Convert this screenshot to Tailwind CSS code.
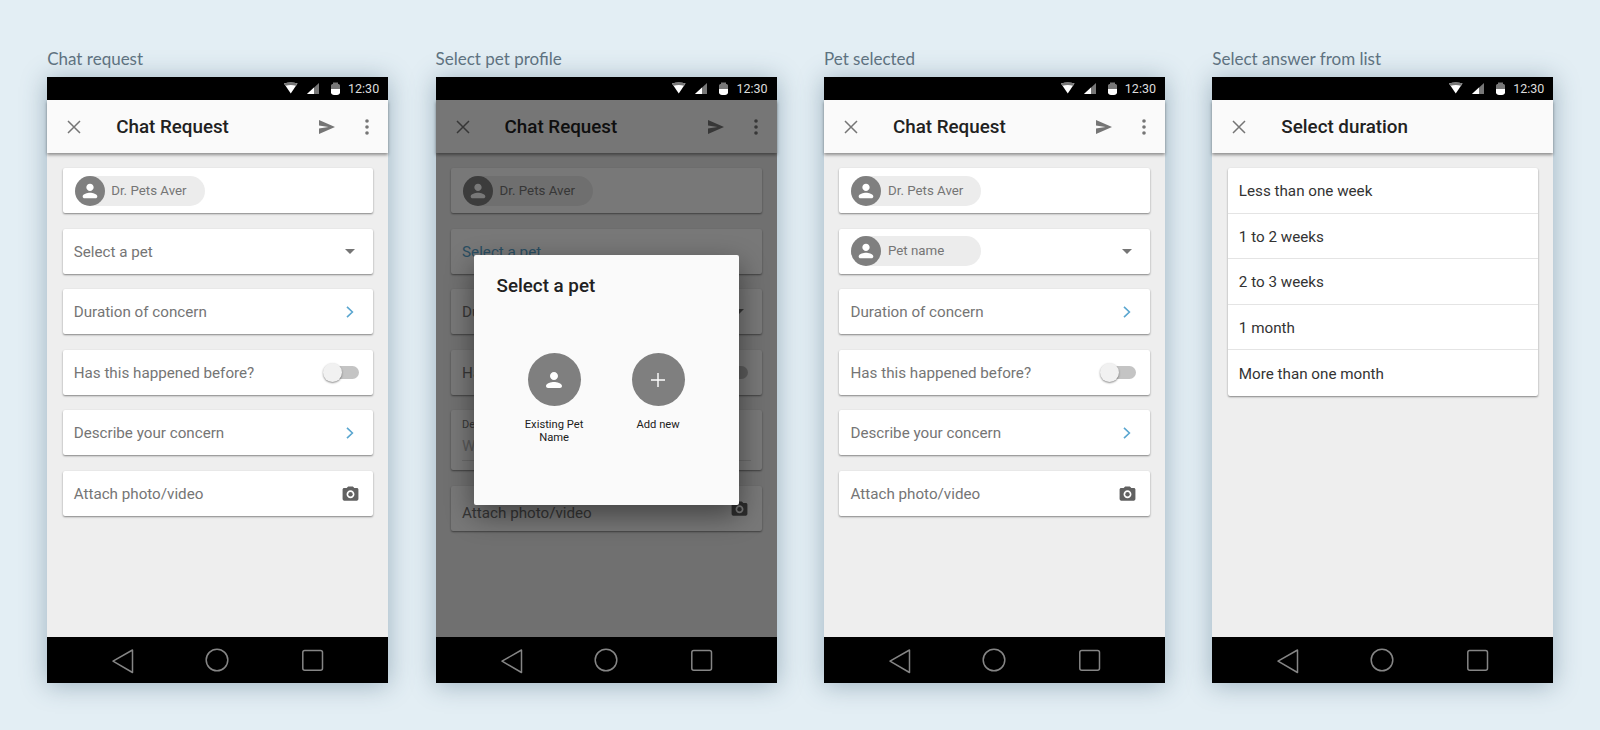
<!DOCTYPE html>
<html lang="en">
<head>
  <meta charset="UTF-8">
  <title>Chat request screens</title>
  <script src="https://cdn.jsdelivr.net/npm/@tailwindcss/browser@4"></script>
</head>
<body class="bg-[#e3eef4] font-['Roboto',sans-serif] h-[730px] w-[1600px] overflow-hidden">
  <!-- shared icons -->
  <svg class="absolute w-0 h-0">
    <symbol id="i-close" viewBox="0 0 14 14"><path d="M1 1l12 12M13 1L1 13" fill="none" stroke="currentColor" stroke-width="1.5"/></symbol>
    <symbol id="i-send" viewBox="0 0 16 14"><path d="M0 0l16 7-16 7V8.6L9.5 7 0 5.400z" fill="currentColor"/></symbol>
    <symbol id="i-dots" viewBox="0 0 4 16"><circle cx="2" cy="2" r="1.800" fill="currentColor"/><circle cx="2" cy="8" r="1.800" fill="currentColor"/><circle cx="2" cy="14" r="1.800" fill="currentColor"/></symbol>
    <symbol id="i-person" viewBox="0 0 24 24"><path d="M12 12c2.210 0 4-1.790 4-4s-1.790-4-4-4-4 1.790-4 4 1.790 4 4 4zm0 2c-2.670 0-8 1.340-8 4 0 1.100.9 2 2 2h12c1.100 0 2-.9 2-2 0-2.660-5.330-4-8-4z" fill="currentColor"/></symbol>
    <symbol id="i-caret" viewBox="0 0 10 5"><path d="M0 0h10L5 5z" fill="currentColor"/></symbol>
    <symbol id="i-chevron" viewBox="0 0 8 12"><path d="M1 .8L6.400 6 1 11.200" fill="none" stroke="currentColor" stroke-width="1.600"/></symbol>
    <symbol id="i-camera" viewBox="0 0 24 24"><path d="M9 3L7.170 5H4c-1.100 0-2 .9-2 2v12c0 1.100.9 2 2 2h16c1.100 0 2-.9 2-2V7c0-1.100-.9-2-2-2h-3.170L15 3H9zm3 15c-2.760 0-5-2.240-5-5s2.240-5 5-5 5 2.240 5 5-2.240 5-5 5z" fill="currentColor"/><circle cx="12" cy="13" r="2.800" fill="currentColor"/></symbol>
    <symbol id="i-status" viewBox="0 0 56 13">
      <path d="M0 1.500C4 0 9.500 0 13.500 1.500L6.750 11.500z" fill="#fff"/>
      <path d="M0 1.500C4 0 9.500 0 13.500 1.500L12 3.700C8.500 2.700 5 2.700 1.500 3.700z" fill="#777"/>
      <path d="M23 12L35 1v11z" fill="#777"/>
      <path d="M23 12l7-6.400V12z" fill="#fff"/>
      <path d="M47 3.500C47 2.500 48 2 49 2V.5h5V2c1 0 2 .5 2 1.500V7h-9z" fill="#777"/>
      <path d="M47 7h9v3.500c0 1.500-1.500 2.500-3 2.500h-3c-1.500 0-3-1-3-2.500z" fill="#fff"/>
    </symbol>
    <symbol id="i-nav" viewBox="0 0 341 46">
      <g fill="none" stroke="#858585" stroke-width="1.500" stroke-linejoin="round">
        <path d="M85.500 13v22.500L66 24.200z"/>
        <circle cx="170" cy="23" r="10.800"/>
        <rect x="255.800" y="13.500" width="19.700" height="19.700" rx="2"/>
      </g>
    </symbol>
  </svg>

  <main class="flex gap-[47.4px] pl-[47.2px] pt-[47px]">

    <!-- Chat request -->
    <section class="w-[341px]">
      <h2 class="h-[24px] mb-[6px] font-['Lato',sans-serif] font-normal text-[17px] leading-[24px] text-[#5e7280]">Chat request</h2>
      <div class="h-[606px] flex flex-col bg-[#eeeeee] shadow-[0_2px_24px_rgba(50,85,110,0.4)]">
        <div class="h-[23px] bg-black flex items-center justify-end pr-[9px] shrink-0">
          <svg class="w-[56px] h-[13px] mr-[8px]"><use href="#i-status"/></svg>
          <span class="mt-[2px] text-[12.500px] leading-none text-[#dddddd]">12:30</span>
        </div>
        <div class="flex-1 flex flex-col min-h-0">
          <header class="h-[53px] bg-[#fafafa] flex items-center relative z-10 shadow-[0_2px_3px_rgba(0,0,0,0.4)] text-[#757575]">
            <svg class="w-[14px] h-[14px] ml-[20px]"><use href="#i-close"/></svg>
            <h1 class="ml-[35px] mt-[2px] flex-1 text-[18.800px] font-medium text-[#212121]">Chat Request</h1>
            <svg class="w-[16px] h-[14px] mr-[30px]"><use href="#i-send"/></svg>
            <svg class="w-[4px] h-[16px] mr-[19px]"><use href="#i-dots"/></svg>
          </header>
          <div class="flex flex-col gap-[15.500px] pl-[15.500px] pr-[15px] pt-[15px]">
            <div class="h-[45px] bg-white rounded-[2px] shadow-[0_1px_2px_rgba(0,0,0,0.45)] flex items-center px-[12px]">
              <div class="w-[130px] h-[30px] rounded-full bg-[#ececec] flex items-center gap-[6.500px]">
                <span class="w-[30px] h-[30px] rounded-full bg-[#7f7f7f] text-white flex items-center justify-center"><svg class="w-[22px] h-[22px]"><use href="#i-person"/></svg></span>
                <span class="text-[13.300px] text-[#757575]">Dr. Pets Aver</span>
              </div>
            </div>
            <div class="h-[45px] bg-white rounded-[2px] shadow-[0_1px_2px_rgba(0,0,0,0.45)] flex items-center justify-between pl-[11px] pr-[18px] text-[15.200px] text-[#757575]">
              <span class="mt-[2px]">Select a pet</span>
              <svg class="w-[10px] h-[5px]"><use href="#i-caret"/></svg>
            </div>
            <div class="h-[45px] bg-white rounded-[2px] shadow-[0_1px_2px_rgba(0,0,0,0.45)] flex items-center justify-between pl-[11px] pr-[19px] text-[15.200px] text-[#757575]">
              <span class="mt-[2px]">Duration of concern</span>
              <svg class="w-[8px] h-[12px] text-[#5aa6d0]"><use href="#i-chevron"/></svg>
            </div>
            <div class="h-[45px] bg-white rounded-[2px] shadow-[0_1px_2px_rgba(0,0,0,0.45)] flex items-center justify-between pl-[11px] pr-[14px] text-[15.200px] text-[#757575]">
              <span class="mt-[2px]">Has this happened before?</span>
              <span class="relative w-[29px] h-[13px] rounded-full bg-[#c4c4c4]"><span class="absolute left-[-7px] top-[-3px] w-[19px] h-[19px] rounded-full bg-[#f1f1f1] shadow-[0_1px_2px_rgba(0,0,0,0.45)]"></span></span>
            </div>
            <div class="h-[45px] bg-white rounded-[2px] shadow-[0_1px_2px_rgba(0,0,0,0.45)] flex items-center justify-between pl-[11px] pr-[19px] text-[15.200px] text-[#757575]">
              <span class="mt-[2px]">Describe your concern</span>
              <svg class="w-[8px] h-[12px] text-[#5aa6d0]"><use href="#i-chevron"/></svg>
            </div>
            <div class="h-[45px] bg-white rounded-[2px] shadow-[0_1px_2px_rgba(0,0,0,0.45)] flex items-center justify-between pl-[11px] pr-[13px] text-[15.200px] text-[#757575]">
              <span class="mt-[2px]">Attach photo/video</span>
              <svg class="w-[19px] h-[19px] text-[#616161]"><use href="#i-camera"/></svg>
            </div>
          </div>
        </div>
        <div class="h-[46px] bg-black shrink-0"><svg class="w-[341px] h-[46px]"><use href="#i-nav"/></svg></div>
      </div>
    </section>

    <!-- Select pet profile -->
    <section class="w-[341px]">
      <h2 class="h-[24px] mb-[6px] font-['Lato',sans-serif] font-normal text-[17px] leading-[24px] text-[#5e7280]">Select pet profile</h2>
      <div class="h-[606px] flex flex-col bg-[#eeeeee] shadow-[0_2px_24px_rgba(50,85,110,0.4)]">
        <div class="h-[23px] bg-black flex items-center justify-end pr-[9px] shrink-0">
          <svg class="w-[56px] h-[13px] mr-[8px]"><use href="#i-status"/></svg>
          <span class="mt-[2px] text-[12.500px] leading-none text-[#dddddd]">12:30</span>
        </div>
        <div class="flex-1 flex flex-col min-h-0 relative">
          <header class="h-[53px] bg-[#fafafa] flex items-center relative z-10 shadow-[0_2px_3px_rgba(0,0,0,0.4)] text-[#757575]">
            <svg class="w-[14px] h-[14px] ml-[20px]"><use href="#i-close"/></svg>
            <h1 class="ml-[35px] mt-[2px] flex-1 text-[18.800px] font-medium text-[#212121]">Chat Request</h1>
            <svg class="w-[16px] h-[14px] mr-[30px]"><use href="#i-send"/></svg>
            <svg class="w-[4px] h-[16px] mr-[19px]"><use href="#i-dots"/></svg>
          </header>
          <div class="flex flex-col gap-[15.500px] pl-[15.500px] pr-[15px] pt-[15px]">
            <div class="h-[45px] bg-white rounded-[2px] shadow-[0_1px_2px_rgba(0,0,0,0.45)] flex items-center px-[12px]">
              <div class="w-[130px] h-[30px] rounded-full bg-[#ececec] flex items-center gap-[6.500px]">
                <span class="w-[30px] h-[30px] rounded-full bg-[#7f7f7f] text-white flex items-center justify-center"><svg class="w-[22px] h-[22px]"><use href="#i-person"/></svg></span>
                <span class="text-[13.300px] text-[#757575]">Dr. Pets Aver</span>
              </div>
            </div>
            <div class="h-[45px] bg-white rounded-[2px] shadow-[0_1px_2px_rgba(0,0,0,0.45)] flex items-center pl-[11px] text-[15.200px] text-[#5aa6d0]">
              <span class="mt-[2px]">Select a pet</span>
            </div>
            <div class="h-[45px] bg-white rounded-[2px] shadow-[0_1px_2px_rgba(0,0,0,0.45)] flex items-center justify-between pl-[11px] pr-[18px] text-[15.200px] text-[#757575]">
              <span class="mt-[2px]">Duration of concern</span>
              <svg class="w-[10px] h-[5px]"><use href="#i-caret"/></svg>
            </div>
            <div class="h-[45px] bg-white rounded-[2px] shadow-[0_1px_2px_rgba(0,0,0,0.45)] flex items-center justify-between pl-[11px] pr-[14px] text-[15.200px] text-[#757575]">
              <span class="mt-[2px]">Has this happened before?</span>
              <span class="relative w-[29px] h-[13px] rounded-full bg-[#c4c4c4]"><span class="absolute left-[-7px] top-[-3px] w-[19px] h-[19px] rounded-full bg-[#f1f1f1]"></span></span>
            </div>
            <div class="h-[60px] bg-white rounded-[2px] shadow-[0_1px_2px_rgba(0,0,0,0.45)] flex flex-col px-[11px] pt-[8px] text-[#757575]">
              <span class="text-[11px] leading-[13px]">Describe your concern</span>
              <span class="mt-[5px] pb-[4px] text-[15.200px] leading-[20px] text-[#bdbdbd] border-b border-[#e0e0e0]">What is your concern?</span>
            </div>
            <div class="h-[45px] bg-white rounded-[2px] shadow-[0_1px_2px_rgba(0,0,0,0.45)] flex items-center justify-between pl-[11px] pr-[13px] text-[15.200px] text-[#757575]">
              <span class="mt-[10px]">Attach photo/video</span>
              <svg class="w-[19px] h-[19px] text-[#616161]"><use href="#i-camera"/></svg>
            </div>
          </div>
          <div class="absolute inset-0 z-20 bg-black/[0.53]"></div>
          <div class="absolute z-30 left-[38px] top-[155px] w-[265px] h-[250px] rounded-[2px] bg-[#fafafa] shadow-[0_10px_28px_rgba(0,0,0,0.45)] pt-[19px]">
            <h3 class="pl-[23px] text-[18.800px] leading-[24px] font-medium text-[#212121]">Select a pet</h3>
            <div class="flex justify-center gap-[24px] mt-[55px]">
              <div class="w-[80px] flex flex-col items-center">
                <span class="w-[53px] h-[53px] rounded-full bg-[#7f7f7f] text-white flex items-center justify-center"><svg class="w-[24px] h-[24px]"><use href="#i-person"/></svg></span>
                <span class="mt-[12px] text-[11.200px] leading-[13px] text-center text-[#212121]">Existing Pet Name</span>
              </div>
              <div class="w-[80px] flex flex-col items-center">
                <span class="w-[53px] h-[53px] rounded-full bg-[#7f7f7f] text-white flex items-center justify-center"><svg class="w-[14px] h-[14px]" viewBox="0 0 14 14"><path d="M7 0v14M0 7h14" stroke="currentColor" stroke-width="1.400"/></svg></span>
                <span class="mt-[12px] text-[11.200px] leading-[13px] text-center text-[#212121]">Add new</span>
              </div>
            </div>
          </div>
        </div>
        <div class="h-[46px] bg-black shrink-0"><svg class="w-[341px] h-[46px]"><use href="#i-nav"/></svg></div>
      </div>
    </section>

    <!-- Pet selected -->
    <section class="w-[341px]">
      <h2 class="h-[24px] mb-[6px] font-['Lato',sans-serif] font-normal text-[17px] leading-[24px] text-[#5e7280]">Pet selected</h2>
      <div class="h-[606px] flex flex-col bg-[#eeeeee] shadow-[0_2px_24px_rgba(50,85,110,0.4)]">
        <div class="h-[23px] bg-black flex items-center justify-end pr-[9px] shrink-0">
          <svg class="w-[56px] h-[13px] mr-[8px]"><use href="#i-status"/></svg>
          <span class="mt-[2px] text-[12.500px] leading-none text-[#dddddd]">12:30</span>
        </div>
        <div class="flex-1 flex flex-col min-h-0">
          <header class="h-[53px] bg-[#fafafa] flex items-center relative z-10 shadow-[0_2px_3px_rgba(0,0,0,0.4)] text-[#757575]">
            <svg class="w-[14px] h-[14px] ml-[20px]"><use href="#i-close"/></svg>
            <h1 class="ml-[35px] mt-[2px] flex-1 text-[18.800px] font-medium text-[#212121]">Chat Request</h1>
            <svg class="w-[16px] h-[14px] mr-[30px]"><use href="#i-send"/></svg>
            <svg class="w-[4px] h-[16px] mr-[19px]"><use href="#i-dots"/></svg>
          </header>
          <div class="flex flex-col gap-[15.500px] pl-[15.500px] pr-[15px] pt-[15px]">
            <div class="h-[45px] bg-white rounded-[2px] shadow-[0_1px_2px_rgba(0,0,0,0.45)] flex items-center px-[12px]">
              <div class="w-[130px] h-[30px] rounded-full bg-[#ececec] flex items-center gap-[6.500px]">
                <span class="w-[30px] h-[30px] rounded-full bg-[#7f7f7f] text-white flex items-center justify-center"><svg class="w-[22px] h-[22px]"><use href="#i-person"/></svg></span>
                <span class="text-[13.300px] text-[#757575]">Dr. Pets Aver</span>
              </div>
            </div>
            <div class="h-[45px] bg-white rounded-[2px] shadow-[0_1px_2px_rgba(0,0,0,0.45)] flex items-center justify-between pl-[12px] pr-[18px] text-[#757575]">
              <div class="w-[130px] h-[30px] rounded-full bg-[#ececec] flex items-center gap-[6.500px]">
                <span class="w-[30px] h-[30px] rounded-full bg-[#7f7f7f] text-white flex items-center justify-center"><svg class="w-[22px] h-[22px]"><use href="#i-person"/></svg></span>
                <span class="text-[13.300px]">Pet name</span>
              </div>
              <svg class="w-[10px] h-[5px]"><use href="#i-caret"/></svg>
            </div>
            <div class="h-[45px] bg-white rounded-[2px] shadow-[0_1px_2px_rgba(0,0,0,0.45)] flex items-center justify-between pl-[11px] pr-[19px] text-[15.200px] text-[#757575]">
              <span class="mt-[2px]">Duration of concern</span>
              <svg class="w-[8px] h-[12px] text-[#5aa6d0]"><use href="#i-chevron"/></svg>
            </div>
            <div class="h-[45px] bg-white rounded-[2px] shadow-[0_1px_2px_rgba(0,0,0,0.45)] flex items-center justify-between pl-[11px] pr-[14px] text-[15.200px] text-[#757575]">
              <span class="mt-[2px]">Has this happened before?</span>
              <span class="relative w-[29px] h-[13px] rounded-full bg-[#c4c4c4]"><span class="absolute left-[-7px] top-[-3px] w-[19px] h-[19px] rounded-full bg-[#f1f1f1] shadow-[0_1px_2px_rgba(0,0,0,0.45)]"></span></span>
            </div>
            <div class="h-[45px] bg-white rounded-[2px] shadow-[0_1px_2px_rgba(0,0,0,0.45)] flex items-center justify-between pl-[11px] pr-[19px] text-[15.200px] text-[#757575]">
              <span class="mt-[2px]">Describe your concern</span>
              <svg class="w-[8px] h-[12px] text-[#5aa6d0]"><use href="#i-chevron"/></svg>
            </div>
            <div class="h-[45px] bg-white rounded-[2px] shadow-[0_1px_2px_rgba(0,0,0,0.45)] flex items-center justify-between pl-[11px] pr-[13px] text-[15.200px] text-[#757575]">
              <span class="mt-[2px]">Attach photo/video</span>
              <svg class="w-[19px] h-[19px] text-[#616161]"><use href="#i-camera"/></svg>
            </div>
          </div>
        </div>
        <div class="h-[46px] bg-black shrink-0"><svg class="w-[341px] h-[46px]"><use href="#i-nav"/></svg></div>
      </div>
    </section>

    <!-- Select answer from list -->
    <section class="w-[341px]">
      <h2 class="h-[24px] mb-[6px] font-['Lato',sans-serif] font-normal text-[17px] leading-[24px] text-[#5e7280]">Select answer from list</h2>
      <div class="h-[606px] flex flex-col bg-[#eeeeee] shadow-[0_2px_24px_rgba(50,85,110,0.4)]">
        <div class="h-[23px] bg-black flex items-center justify-end pr-[9px] shrink-0">
          <svg class="w-[56px] h-[13px] mr-[8px]"><use href="#i-status"/></svg>
          <span class="mt-[2px] text-[12.500px] leading-none text-[#dddddd]">12:30</span>
        </div>
        <div class="flex-1 flex flex-col min-h-0">
          <header class="h-[53px] bg-[#fafafa] flex items-center relative z-10 shadow-[0_2px_3px_rgba(0,0,0,0.4)] text-[#757575]">
            <svg class="w-[14px] h-[14px] ml-[20px]"><use href="#i-close"/></svg>
            <h1 class="ml-[35px] mt-[2px] flex-1 text-[18.800px] font-medium text-[#212121]">Select duration</h1>
          </header>
          <div class="pl-[15.500px] pr-[15px] pt-[15px]">
            <ul class="bg-white rounded-[2px] shadow-[0_1px_2px_rgba(0,0,0,0.45)] divide-y divide-[#e4e4e4] text-[15.200px] text-[#333333]">
              <li class="h-[45.500px] flex items-center pl-[11px] pt-[3px]">Less than one week</li>
              <li class="h-[45.500px] flex items-center pl-[11px] pt-[3px]">1 to 2 weeks</li>
              <li class="h-[45.500px] flex items-center pl-[11px] pt-[3px]">2 to 3 weeks</li>
              <li class="h-[45.500px] flex items-center pl-[11px] pt-[3px]">1 month</li>
              <li class="h-[45.500px] flex items-center pl-[11px] pt-[3px]">More than one month</li>
            </ul>
          </div>
        </div>
        <div class="h-[46px] bg-black shrink-0"><svg class="w-[341px] h-[46px]"><use href="#i-nav"/></svg></div>
      </div>
    </section>

  </main>
</body>
</html>
